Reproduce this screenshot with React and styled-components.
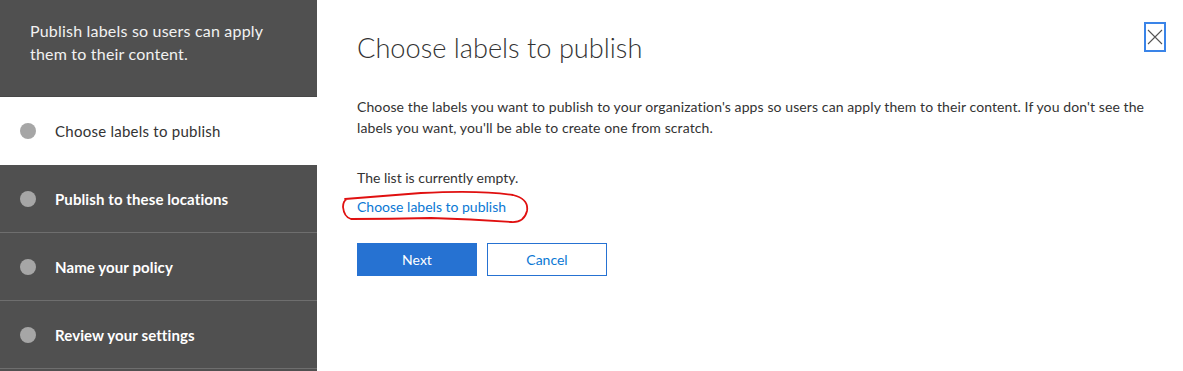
import React from "react";
import styled, { createGlobalStyle } from "styled-components";

const Global = createGlobalStyle`
  html, body { margin: 0; padding: 0; background: #fff; }
  body { font-family: "Segoe UI", Lato, "Open Sans", sans-serif; }
  #root { height: 371px; overflow: hidden; }
`;

const Page = styled.div`
  display: flex;
  height: 371px;
  width: 1183px;
`;

const Sidebar = styled.nav`
  width: 317px;
  flex: none;
  background: #505050;
  display: flex;
  flex-direction: column;
`;

const SideHeader = styled.div`
  height: 97px;
  box-sizing: border-box;
  padding: 19px 30px 0 30px;
  font-size: 16px;
  line-height: 23px;
  letter-spacing: 0.2px;
  color: #f2f2f2;
  border-bottom: 1px solid #474747;
`;

const Step = styled.div`
  height: 68px;
  box-sizing: border-box;
  display: flex;
  align-items: center;
  gap: 19px;
  padding-left: 20px;
  background: ${(p) => (p.$active ? "#ffffff" : "#505050")};
  border-bottom: 1px solid ${(p) => (p.$active ? "#ffffff" : "#6e6e6e")};
  color: ${(p) => (p.$active ? "#333333" : "#ffffff")};
  font-size: 15px;
  letter-spacing: ${(p) => (p.$active ? "0.25px" : "0.1px")};
  font-weight: ${(p) => (p.$active ? 400 : 700)};
`;

const Dot = styled.span`
  width: 16px;
  height: 16px;
  border-radius: 50%;
  background: #a6a6a6;
  flex: none;
`;

const Main = styled.main`
  flex: 1;
  padding: 22px 17px 0 40px;
  color: #333333;
`;

const TitleRow = styled.div`
  display: flex;
  justify-content: space-between;
  align-items: flex-start;
`;

const Title = styled.h1`
  margin: 8px 0 0 0;
  font-size: 27.2px;
  line-height: 36px;
  font-weight: 300;
  color: #333333;
`;

const CloseButton = styled.button`
  width: 22px;
  height: 30px;
  box-sizing: border-box;
  border: 2px solid #3a84e8;
  background: #fff;
  padding: 0;
  display: flex;
  align-items: center;
  justify-content: center;
`;

const Text = styled.p`
  margin: ${(p) => p.$mt || 0}px 0 0 0;
  font-size: 14px;
  line-height: 21px;
  letter-spacing: ${(p) => p.$ls || 0}px;
  color: #333333;
  max-width: 805px;
`;

const LinkWrap = styled.div`
  position: relative;
  margin-top: 8px;
  width: max-content;
`;

const Link = styled.a`
  font-size: 14px;
  line-height: 21px;
  color: #0a78d4;
  text-decoration: none;
  cursor: pointer;
`;

const Scribble = styled.svg`
  position: absolute;
  left: -16px;
  top: -7px;
  overflow: visible;
  pointer-events: none;
`;

const Buttons = styled.div`
  display: flex;
  gap: 10px;
  margin-top: 26px;
`;

const Button = styled.button`
  width: 120px;
  height: 33px;
  box-sizing: border-box;
  font-family: inherit;
  font-size: 14px;
  border: 1px solid #2672d2;
  background: ${(p) => (p.$primary ? "#2672d2" : "#ffffff")};
  color: ${(p) => (p.$primary ? "#ffffff" : "#0a78d4")};
`;

const steps = [
  "Choose labels to publish",
  "Publish to these locations",
  "Name your policy",
  "Review your settings",
];

export default function App() {
  return (
    <>
      <Global />
      <Page>
        <Sidebar>
          <SideHeader>
            Publish labels so users can apply
            <br />
            them to their content.
          </SideHeader>
          {steps.map((s, i) => (
            <Step key={s} $active={i === 0}>
              <Dot />
              {s}
            </Step>
          ))}
        </Sidebar>
        <Main>
          <TitleRow>
            <Title>Choose labels to publish</Title>
            <CloseButton aria-label="Close">
              <svg width="16" height="16" viewBox="0 0 16 16">
                <path d="M1 1 L15 15 M15 1 L1 15" stroke="#555" strokeWidth="1.1" fill="none" />
              </svg>
            </CloseButton>
          </TitleRow>
          <Text $mt={30} $ls={0.1}>
            Choose the labels you want to publish to your organization's apps so users can apply them to their content. If you don't see the labels you want, you'll be able to create one from scratch.
          </Text>
          <Text $mt={29}>The list is currently empty.</Text>
          <LinkWrap>
            <Link>Choose labels to publish</Link>
            <Scribble width="190" height="40" viewBox="0 0 190 40">
              <path
                d="M4 10 Q40 7 80 4 Q140 1 172 6 Q188 10 186 22 Q183 34 170 33 Q130 30 90 29 Q50 30 10 30 Q3 28 2 18 Q2 12 6 10"
                stroke="#e01010"
                strokeWidth="1.8"
                fill="none"
                strokeLinecap="round"
              />
            </Scribble>
          </LinkWrap>
          <Buttons>
            <Button $primary>Next</Button>
            <Button>Cancel</Button>
          </Buttons>
        </Main>
      </Page>
    </>
  );
}
